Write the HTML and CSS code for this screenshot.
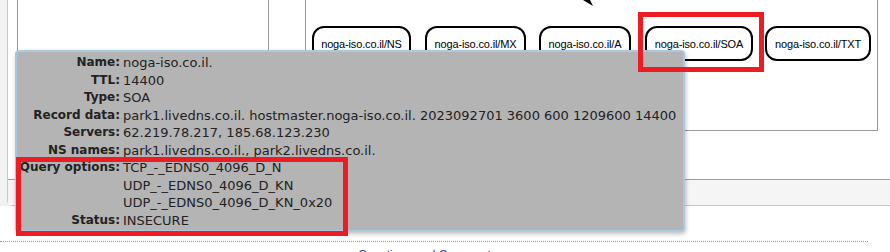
FILE: index.html
```html
<!DOCTYPE html>
<html lang="en">
<head>
    <meta charset="UTF-8" />
    <meta name="viewport" content="width=device-width, initial-scale=1.0" />
    <title>noga-iso.co.il - DNS records</title>
    <link rel="stylesheet" href="styles.css">
</head>
<body>
    <div class="frame">
        <div class="panel">
            <div class="panes">
                <div class="list-pane"></div>
                <div class="diagram">
                    <svg class="edge" width="20" height="10" viewBox="0 0 20 10">
                        <polygon points="3,0 10,0 13,6" fill="#000" />
                    </svg>
                    <div class="node node-ns">noga-iso.co.il/NS</div>
                    <div class="node node-mx">noga-iso.co.il/MX</div>
                    <div class="node node-a">noga-iso.co.il/A</div>
                    <div class="node node-soa">noga-iso.co.il/SOA</div>
                    <div class="node node-txt">noga-iso.co.il/TXT</div>
                </div>
            </div>
            <div class="status-strip"></div>
        </div>
    </div>

    <div class="footer">
        <a href="#" class="footer-link">Questions and Comments</a>
    </div>

    <!-- tooltip for the SOA node -->
    <div class="tooltip">
        <div class="record">
            <span class="label">Name:</span><span class="value">noga-iso.co.il.</span>
            <span class="label">TTL:</span><span class="value">14400</span>
            <span class="label">Type:</span><span class="value">SOA</span>
            <span class="label">Record data:</span><span class="value">park1.livedns.co.il. hostmaster.noga-iso.co.il. 2023092701 3600 600 1209600 14400</span>
            <span class="label">Servers:</span><span class="value">62.219.78.217, 185.68.123.230</span>
            <span class="label">NS names:</span><span class="value">park1.livedns.co.il., park2.livedns.co.il.</span>
            <span class="label">Query options:</span><span class="value">TCP_-_EDNS0_4096_D_N<br>UDP_-_EDNS0_4096_D_KN<br>UDP_-_EDNS0_4096_D_KN_0x20</span>
            <span class="label">Status:</span><span class="value">INSECURE</span>
        </div>
    </div>

    <!-- annotation boxes -->
    <div class="mark mark-soa"></div>
    <div class="mark mark-query"></div>
</body>
</html>
```

FILE: styles.css
```css
:root {
    --mark-red: #ed1c24;
    --pane-border: #999;
    --tip-bg: #b4b4b4;
    --tip-border: #a9c9e1;
    --text-dark: #222;
}

* {
    margin: 0;
    padding: 0;
    box-sizing: border-box;
}

body {
    width: 890px;
    height: 252px;
    overflow: hidden;
    position: relative;
    background-color: white;
    font-family: 'DejaVu Sans', Verdana, sans-serif;
    color: var(--text-dark);
}

.frame {
    padding-left: 7px;
    background-color: #f1f1f1;
}

.panel {
    height: 206px;
    background-color: white;
    border-left: 1px solid #c6c6c6;
    border-bottom: 1px solid #c8c8c8;
    border-bottom-left-radius: 6px;
    display: flex;
    flex-direction: column;
}

.panes {
    display: flex;
    height: 131px;
}

.list-pane {
    width: 252px;
    margin-left: 9px;
    border: 1px solid var(--pane-border);
    border-top: none;
}

.diagram {
    position: relative;
    width: 573px;
    margin-left: 36px;
    border: 1px solid var(--pane-border);
    border-top: none;
}

.edge {
    position: absolute;
    left: 274px;
    top: 0;
}

.node {
    position: absolute;
    top: 26px;
    height: 35px;
    border: 2px solid #000;
    border-radius: 12px;
    background-color: white;
    font-family: 'Liberation Sans', Arial, sans-serif;
    font-size: 11px;
    letter-spacing: -0.15px;
    color: #000;
    display: flex;
    align-items: center;
    justify-content: center;
}

.node-ns { left: 6px; width: 99px; }
.node-mx { left: 119px; width: 101px; }
.node-a { left: 233px; width: 92px; }
.node-soa { left: 339px; width: 108px; }
.node-txt { left: 459px; width: 106px; }

.status-strip {
    margin-top: 48px;
    flex: 1;
    background-color: #f5f5f5;
    border-top: 1px solid #a0a0a0;
}

.footer {
    margin-top: 35px;
    width: 868px;
    border-top: 1px dotted #b4946c;
    padding: 2px 0 0 358px;
}

.footer-link {
    font-family: 'Liberation Sans', Arial, sans-serif;
    font-size: 12px;
    color: #3a3aae;
    text-decoration: underline;
}

.tooltip {
    position: absolute;
    left: 15px;
    top: 50px;
    width: 670px;
    height: 182px;
    background-color: var(--tip-bg);
    border: 2px solid var(--tip-border);
    border-radius: 4px;
    box-shadow: 1px 2px 4px rgba(0, 0, 0, 0.25);
    padding: 2px 3px;
}

.record {
    display: grid;
    grid-template-columns: 100px 1fr;
    column-gap: 3px;
    line-height: 17.5px;
}

.label {
    justify-self: end;
    white-space: nowrap;
    font-size: 12px;
    font-weight: bold;
}

.value {
    font-size: 13px;
    white-space: nowrap;
}

.mark {
    position: absolute;
    border: 5px solid var(--mark-red);
}

.mark-soa {
    left: 638px;
    top: 12px;
    width: 126px;
    height: 60px;
}

.mark-query {
    left: 16px;
    top: 157px;
    width: 332px;
    height: 79px;
}
```
